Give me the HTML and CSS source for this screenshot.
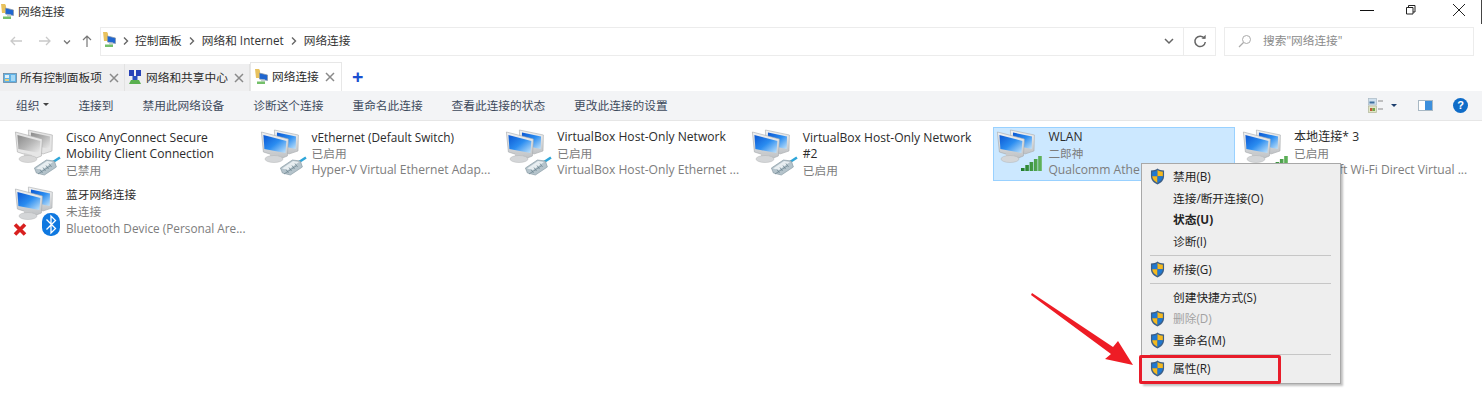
FILE: index.html
```html
<!DOCTYPE html>
<html lang="zh-CN">
<head>
<meta charset="utf-8">
<title>网络连接</title>
<link rel="stylesheet" href="styles.css">
</head>
<body>
<svg class="defs" width="0" height="0" aria-hidden="true">
  <defs>
    <linearGradient id="scr" x1="0" y1="0" x2="1" y2="1"><stop offset="0" stop-color="#0a56d2"/><stop offset=".5" stop-color="#2a8cf0"/><stop offset="1" stop-color="#c4e4fa"/></linearGradient>
    <linearGradient id="scrg" x1="0" y1="0" x2="1" y2="1"><stop offset="0" stop-color="#8a8a8a"/><stop offset=".5" stop-color="#b5b5b5"/><stop offset="1" stop-color="#ececec"/></linearGradient>
    <linearGradient id="bar" x1="0" y1="0" x2="1" y2="0"><stop offset="0" stop-color="#1f7a2a"/><stop offset="1" stop-color="#62b45c"/></linearGradient>
    <linearGradient id="frame" x1="0" y1="0" x2="0" y2="1"><stop offset="0" stop-color="#f1f2f3"/><stop offset="1" stop-color="#bfc2c5"/></linearGradient>
    <symbol id="pc" viewBox="0 0 48 48">
      <path d="M15.400 1l24 5-.4 16-9 3-14-6z" fill="url(#frame)" stroke="#a9acaf" stroke-width=".6"/>
      <path d="M18 3.500l19 4-.3 12.500-19-4z" fill="url(#scr)"/>
      <path d="M2.400 3l27 7-1 17-5 2-19-6z" fill="url(#frame)" stroke="#a5a8ab" stroke-width=".6"/>
      <path d="M4.400 6l23 6-1 12-21-4z" fill="url(#scr)"/>
      <path d="M11 24l8 2 0 3-8 0z" fill="#c9cbcd"/>
      <ellipse cx="15" cy="30" rx="9" ry="3.500" fill="#d4d6d8" stroke="#b3b5b7" stroke-width=".5"/>
    </symbol>
    <symbol id="pc-off" viewBox="0 0 48 48">
      <path d="M15.400 1l24 5-.4 16-9 3-14-6z" fill="#e4e4e4" stroke="#adadad" stroke-width=".6"/>
      <path d="M18 3.500l19 4-.3 12.500-19-4z" fill="url(#scrg)"/>
      <path d="M2.400 3l27 7-1 17-5 2-19-6z" fill="#e6e6e6" stroke="#a8a8a8" stroke-width=".6"/>
      <path d="M4.400 6l23 6-1 12-21-4z" fill="url(#scrg)"/>
      <path d="M11 24l8 2 0 3-8 0z" fill="#cfcfcf"/>
      <ellipse cx="15" cy="30" rx="9" ry="3.500" fill="#d8d8d8" stroke="#b8b8b8" stroke-width=".5"/>
    </symbol>
    <symbol id="plug" viewBox="0 0 48 48">
      <path d="M40 33l7-4.500" stroke="#2fa6d9" stroke-width="2.600" fill="none"/>
      <path d="M21.400 39l12-8 8 1 2 6-12 8-8-2z" fill="#b4c3cb" stroke="#7f929c" stroke-width=".6"/>
      <path d="M23 39.500l11-7.500 6 1-11 8z" fill="#e8eef1"/>
      <path d="M25 45l12-8M27 40.500l2.500 3.500M30 38.500l2.500 3.500M33 36.500l2.500 3.500M36 34.500l2.500 3.500" stroke="#6f8692" stroke-width=".8" fill="none"/>
    </symbol>
    <symbol id="bars" viewBox="0 0 48 48">
      <path d="M26 42h3.600v-3h-3.600zM30.300 42h3.600v-6h-3.600zM34.600 42h3.600v-9h-3.600zM38.900 42h3.600v-12h-3.600zM43.200 42h3.600V27h-3.600z" fill="url(#bar)"/>
    </symbol>
    <symbol id="shield" viewBox="0 0 16 18">
      <path d="M8 .5c2 1.500 4 2 7 2.200v6c0 4-3 7-7 8.800-4-1.800-7-4.800-7-8.800v-6c3-.2 5-.7 7-2.200z" fill="#3d5f86"/>
      <path d="M8 2v6.800H2.300V3.800C4.700 3.600 6.400 3.100 8 2z" fill="#1f78d1"/>
      <path d="M8 2c1.600 1.100 3.300 1.600 5.700 1.800v5H8z" fill="#f5b91e"/>
      <path d="M2.300 8.800H8v7C4.800 14.300 2.600 12 2.300 8.800z" fill="#f5b91e"/>
      <path d="M8 8.800h5.700c-.3 3.200-2.500 5.500-5.700 7z" fill="#1f78d1"/>
    </symbol>
    <symbol id="folder-pc" viewBox="0 0 16 16">
      <path d="M1 0h4l1 1.500V9H2z" fill="#e8c25e"/>
      <path d="M5.500 4l8 2v5.500l-8-1.500z" fill="#1f66d0" stroke="#8a97a3" stroke-width=".7"/>
      <path d="M7 10.500h4v2H7z" fill="#c6ced4"/>
      <path d="M3 12.500h8v2.500H3z" fill="#74c06a"/>
    </symbol>
    <symbol id="chev" viewBox="0 0 9 10">
      <path d="M3 1.500L6.500 5 3 8.500" stroke="#666" stroke-width="1.400" fill="none"/>
    </symbol>
    <symbol id="close-x" viewBox="0 0 10 10">
      <path d="M1 1l8 8M9 1L1 9" stroke="#8a8a8a" stroke-width="1.500" fill="none"/>
    </symbol>
  </defs>
</svg>

<header class="titlebar">
  <svg class="ico16"><use href="#folder-pc"/></svg>
  <span class="title">网络连接</span>
  <div class="winctl">
    <svg class="wc" viewBox="0 0 14 14"><path d="M0 7.500h14" stroke="#111" fill="none"/></svg>
    <svg class="wc" viewBox="0 0 14 14"><path d="M.5 4.500h6.500v6.500H.5zM2.500 4.500v-2h6.500v6.500H7" stroke="#222" fill="none"/></svg>
    <svg class="wc" viewBox="0 0 14 14"><path d="M1 1l12 12M13 1L1 13" stroke="#222" fill="none"/></svg>
  </div>
</header>

<nav class="navbar">
  <svg class="nav-ico" viewBox="0 0 14 14"><path d="M13 7H2M6 3L2 7l4 4" stroke="#c9c9c9" stroke-width="1.300" fill="none"/></svg>
  <svg class="nav-ico" viewBox="0 0 14 14"><path d="M1 7h11M8 3l4 4-4 4" stroke="#c9c9c9" stroke-width="1.300" fill="none"/></svg>
  <svg class="nav-chev" viewBox="0 0 8 8"><path d="M1 2.500l3 3 3-3" stroke="#777" stroke-width="1.300" fill="none"/></svg>
  <svg class="nav-ico" viewBox="0 0 14 14"><path d="M7 13V2M3 6l4-4 4 4" stroke="#777" stroke-width="1.200" fill="none"/></svg>
  <div class="address">
    <svg class="ico16 addr-ico"><use href="#folder-pc"/></svg>
    <svg class="crumb-sep"><use href="#chev"/></svg><span class="crumb">控制面板</span>
    <svg class="crumb-sep"><use href="#chev"/></svg><span class="crumb">网络和 Internet</span>
    <svg class="crumb-sep"><use href="#chev"/></svg><span class="crumb">网络连接</span>
    <svg class="addr-chev" viewBox="0 0 10 10"><path d="M1 3l4 4 4-4" stroke="#666" stroke-width="1.500" fill="none"/></svg>
    <span class="refresh"><svg viewBox="0 0 14 14" width="14" height="14"><path d="M11.500 4.500A5.200 5.200 0 1 0 12.300 8" stroke="#666" stroke-width="1.500" fill="none"/><path d="M8.500 4.800h4.200V.8z" fill="#666"/></svg></span>
  </div>
  <div class="search">
    <svg viewBox="0 0 14 14" width="14" height="14"><circle cx="8.500" cy="5.500" r="4" stroke="#aaa" fill="none"/><path d="M5.500 8.500L1 13" stroke="#aaa" stroke-width="1.200"/></svg>
    <span class="crumb">搜索"网络连接"</span>
  </div>
</nav>

<div class="tabs">
  <div class="tab">
    <svg class="ico14" viewBox="0 0 14 10"><rect x=".5" y=".5" width="13" height="9" fill="#5fb2e6" stroke="#6d8ba3" stroke-width=".8"/><rect x="2" y="2" width="4" height="3" fill="#dff0fa"/><rect x="8" y="2" width="4" height="6" fill="#a6d8f4"/><rect x="2" y="6" width="4" height="2" fill="#e6cf7e"/></svg>
    <span class="tab-text">所有控制面板项</span><svg class="tab-x"><use href="#close-x"/></svg>
  </div>
  <div class="tab tab-second">
    <svg class="ico14 ico-tall" viewBox="0 0 14 15"><rect x="1" y="0" width="5" height="6" fill="#2742b8"/><rect x="8" y="0" width="5" height="6" fill="#2742b8"/><rect x="4.500" y="6" width="5" height="4" fill="#2b4fc0"/><path d="M1 14h12l-2-4H3z" fill="#5ab04f"/></svg>
    <span class="tab-text">网络和共享中心</span><svg class="tab-x"><use href="#close-x"/></svg>
  </div>
  <div class="tab tab-active">
    <svg class="ico16"><use href="#folder-pc"/></svg>
    <span class="tab-text">网络连接</span><svg class="tab-x"><use href="#close-x"/></svg>
  </div>
  <span class="tab-add">+</span>
</div>

<div class="toolbar">
  <span class="tb-item">组织<i class="caret"></i></span>
  <span class="tb-item">连接到</span>
  <span class="tb-item">禁用此网络设备</span>
  <span class="tb-item">诊断这个连接</span>
  <span class="tb-item">重命名此连接</span>
  <span class="tb-item">查看此连接的状态</span>
  <span class="tb-item">更改此连接的设置</span>
  <div class="tb-right">
    <svg class="view-ico" viewBox="0 0 15 15"><rect x=".5" y=".5" width="8" height="6.500" fill="#cfe0ee" stroke="#a8b8c4" stroke-width=".7"/><rect x="1.500" y="3.500" width="5" height="2" fill="#3f6f9c"/><rect x=".5" y="8" width="8" height="6.500" fill="#e3e6c6" stroke="#b0b59a" stroke-width=".7"/><rect x="2" y="10" width="2.500" height="3" fill="#c25a3a"/><rect x="4.500" y="10" width="2.500" height="3" fill="#6fa84a"/><path d="M10 3h5M10 11h5" stroke="#8a8a8a"/></svg>
    <i class="caret caret-dark"></i>
    <svg class="pane-ico" viewBox="0 0 15 11"><rect x=".5" y=".5" width="14" height="10" fill="#fff" stroke="#a8b8c4"/><rect x="7" y="1" width="7" height="9" fill="#3c8fdc"/></svg>
    <span class="help">?</span>
  </div>
</div>

<main class="grid">
  <article class="tile">
    <span class="tile-ico"><svg><use href="#pc-off"/></svg><svg><use href="#plug"/></svg></span>
    <div class="tile-text"><p class="en two-line">Cisco AnyConnect Secure<br>Mobility Client Connection</p><p class="sub">已禁用</p></div>
  </article>
  <article class="tile">
    <span class="tile-ico"><svg><use href="#pc"/></svg><svg><use href="#plug"/></svg></span>
    <div class="tile-text"><p class="en en-s">vEthernet (Default Switch)</p><p class="sub">已启用</p><p class="sub en">Hyper-V Virtual Ethernet Adap...</p></div>
  </article>
  <article class="tile">
    <span class="tile-ico"><svg><use href="#pc"/></svg><svg><use href="#plug"/></svg></span>
    <div class="tile-text"><p class="en">VirtualBox Host-Only Network</p><p class="sub">已启用</p><p class="sub en">VirtualBox Host-Only Ethernet ...</p></div>
  </article>
  <article class="tile">
    <span class="tile-ico"><svg><use href="#pc"/></svg><svg><use href="#plug"/></svg></span>
    <div class="tile-text"><p class="en two-line">VirtualBox Host-Only Network<br>#2</p><p class="sub">已启用</p></div>
  </article>
  <article class="tile tile-selected">
    <span class="tile-ico"><svg><use href="#pc"/></svg><svg><use href="#bars"/></svg></span>
    <div class="tile-text"><p class="en">WLAN</p><p class="sub">二郎神</p><p class="sub en">Qualcomm Athe</p></div>
  </article>
  <article class="tile">
    <span class="tile-ico"><svg><use href="#pc"/></svg><svg><use href="#bars"/></svg></span>
    <div class="tile-text"><p class="en">本地连接* 3</p><p class="sub">已启用</p><p class="sub en">Microsoft Wi-Fi Direct Virtual ...</p></div>
  </article>
  <article class="tile">
    <span class="tile-ico"><svg><use href="#pc"/></svg>
      <svg viewBox="0 0 48 48"><path d="M2 38.500l10 10M12 38.500l-10 10" stroke="#d8201f" stroke-width="3.600"/><rect x="29" y="27" width="18" height="23" rx="8.500" fill="#0f78e0"/><path d="M33.500 33.500l9 9-4.500 4.500V30l4.500 4.500-9 9" stroke="#fff" stroke-width="1.300" fill="none"/></svg>
    </span>
    <div class="tile-text tile-text-row2"><p>蓝牙网络连接</p><p class="sub">未连接</p><p class="sub en en-s">Bluetooth Device (Personal Are...</p></div>
  </article>
</main>

<div class="menu">
  <div class="mi"><svg class="mi-ico"><use href="#shield"/></svg>禁用(B)</div>
  <div class="mi">连接/断开连接(O)</div>
  <div class="mi mi-bold">状态(U)</div>
  <div class="mi">诊断(I)</div>
  <div class="sep"></div>
  <div class="mi"><svg class="mi-ico"><use href="#shield"/></svg>桥接(G)</div>
  <div class="sep"></div>
  <div class="mi">创建快捷方式(S)</div>
  <div class="mi mi-off"><svg class="mi-ico"><use href="#shield"/></svg>删除(D)</div>
  <div class="mi"><svg class="mi-ico"><use href="#shield"/></svg>重命名(M)</div>
  <div class="sep"></div>
  <div class="mi mi-boxed"><svg class="mi-ico"><use href="#shield"/></svg>属性(R)</div>
</div>

<svg class="arrow" viewBox="0 0 120 90" width="120" height="90"><path d="M11 3L92 57 97 51 112 75 84 69 90 64 10 5z" fill="#ee1c25"/></svg>
</body>
</html>
```
FILE: styles.css
```css
*, *::after { box-sizing: border-box; }
html, body { margin: 0; padding: 0; }
body {
  width: 1482px;
  height: 414px;
  overflow: hidden;
  background: #fff;
  color: #2b2b2b;
  font: 11.7px/16px "Open Sans", "Noto Sans CJK SC", sans-serif;
  position: relative;
}
.defs { position: absolute; }
.ico16 { width: 16px; height: 16px; flex: none; }
.ico14 { width: 14px; height: 10px; flex: none; }
.ico-tall { height: 15px; }

.titlebar {
  height: 24px;
  display: flex;
  align-items: center;
  padding-left: 0;
  gap: 2px;
  border-right: 1px solid #444;
}
.title { color: #333; padding-bottom: 2px; }
.winctl { margin-left: auto; display: flex; gap: 32px; margin-right: 15px; margin-top: -4px; }
.wc { width: 14px; height: 14px; }

.navbar {
  height: 32px;
  display: flex;
  align-items: center;
  padding-left: 9px;
  margin-top: 1px;
}
.nav-ico { width: 14px; height: 14px; margin-right: 15px; }
.nav-chev { width: 8px; height: 8px; margin: 0 9px -1px -4px; }
.nav-ico:nth-of-type(4) { margin-right: 6px; margin-left: 0; }
.address {
  width: 1116px;
  height: 29px;
  border: 1px solid #ececec;
  display: flex;
  align-items: center;
  padding-left: 1px;
  color: #333;
  gap: 5.500px;
}
.addr-ico { margin-right: -3px; margin-top: -2px; }
.crumb { padding-bottom: 2px; }
.crumb-sep { width: 9px; height: 10px; flex: none; margin-top: -1px; }
.addr-chev { width: 10px; height: 10px; margin-left: auto; margin-right: 9px; }
.refresh {
  width: 32px;
  height: 27px;
  border-left: 1px solid #ececec;
  display: flex;
  align-items: center;
  justify-content: center;
  margin-left: -5.500px;
}
.search {
  width: 250px;
  height: 29px;
  margin-left: 8px;
  border: 1px solid #ececec;
  display: flex;
  align-items: center;
  gap: 11px;
  padding-left: 13px;
  color: #8b8b8b;
}

.tabs {
  height: 34px;
  display: flex;
  align-items: flex-end;
}
.tab {
  width: 125px;
  height: 27px;
  background: #efeff0;
  border-right: 1px solid #e2e2e2;
  display: flex;
  align-items: center;
  padding-left: 3px;
  gap: 3px;
}
.tab-second { gap: 4px; padding-left: 3px; }
.tab-active {
  width: 92px;
  height: 29px;
  background: #fff;
  border: 1px solid #e7e7e7;
  border-bottom: 0;
  gap: 2px;
}
.tab-text { padding-bottom: 2px; }
.tab-x { width: 10px; height: 10px; margin-left: auto; margin-right: 5px; flex: none; }
.tab-active .tab-x { margin-right: 6px; }
.tab-add { color: #1a4fd0; font-size: 20px; font-weight: 700; line-height: 25px; margin: 0 0 2px 10px; }

.toolbar {
  height: 30px;
  background: #f3f4f6;
  border-bottom: 1px solid #e6e6e6;
  display: flex;
  align-items: center;
  padding-left: 16px;
  gap: 29px;
  color: #3d4a5c;
}
.tb-item { display: flex; align-items: center; padding-bottom: 2px; }
.caret {
  display: inline-block;
  width: 0; height: 0;
  margin-left: 4px;
  border: 3px solid transparent;
  border-top-color: #444;
  border-bottom: 0;
}
.caret-dark { margin: 0 21px 0 8px; border-top-color: #1d3f6e; }
.tb-right { margin-left: auto; display: flex; align-items: center; padding-right: 14px; }
.view-ico { width: 15px; height: 15px; }
.pane-ico { width: 15px; height: 11px; margin-right: 20px; }
.help {
  width: 15px; height: 15px; border-radius: 50%;
  background: #0f6cc8; color: #fff;
  font: 700 11px/15px "Liberation Sans", sans-serif;
  text-align: center;
}

.grid {
  display: grid;
  grid-template-columns: repeat(6, 242px);
  grid-auto-rows: 54px;
  column-gap: 3.600px;
  row-gap: 3px;
  padding: 6px 0 0 11px;
}
.tile { display: flex; border: 1px solid transparent; }
.tile-selected { background: #cce8ff; border-color: #99d1ff; }
.tile-ico { position: relative; width: 54px; flex: none; }
.tile-ico svg { position: absolute; left: 1px; top: 1px; width: 48px; height: 48px; overflow: visible; }
.tile-text { padding-top: 1px; min-width: 0; white-space: nowrap; color: #2b2b2b; }
.tile-text p { margin: 0 0 1px; line-height: 16px; }
.tile-text .en { font-size: 12.100px; margin-bottom: 0; }
.tile-text .sub.en { margin-top: 1px; }
.tile-text .en-s { font-size: 11.800px; }
.tile-text .two-line { padding-top: 1px; }
.sub { color: #7d7d7d; }

.menu {
  position: absolute;
  left: 1141px;
  top: 163px;
  width: 200px;
  height: 221px;
  background: #eeeeee;
  border: 1px solid #a8a8a8;
  box-shadow: 2px 2px 2px rgba(0,0,0,.25);
  padding: 2px 9px 0 2px;
  color: #222;
}
.mi {
  height: 21.500px;
  line-height: 21.500px;
  padding-left: 29px;
  position: relative;
}
.mi-ico { position: absolute; left: 6px; top: 2px; width: 15px; height: 17px; }
.mi-bold { font-weight: 700; }
.mi-off { color: #a2a2a2; }
.sep { height: 1px; margin: 3px 0 2.500px 6px; background: #c6c6c6; }
.mi-boxed::after {
  content: "";
  position: absolute;
  left: -5px;
  top: -3px;
  width: 142px;
  height: 29px;
  border: 3px solid #e81c2a;
  border-radius: 2px;
}
.arrow { position: absolute; left: 1021px; top: 290px; }
```
